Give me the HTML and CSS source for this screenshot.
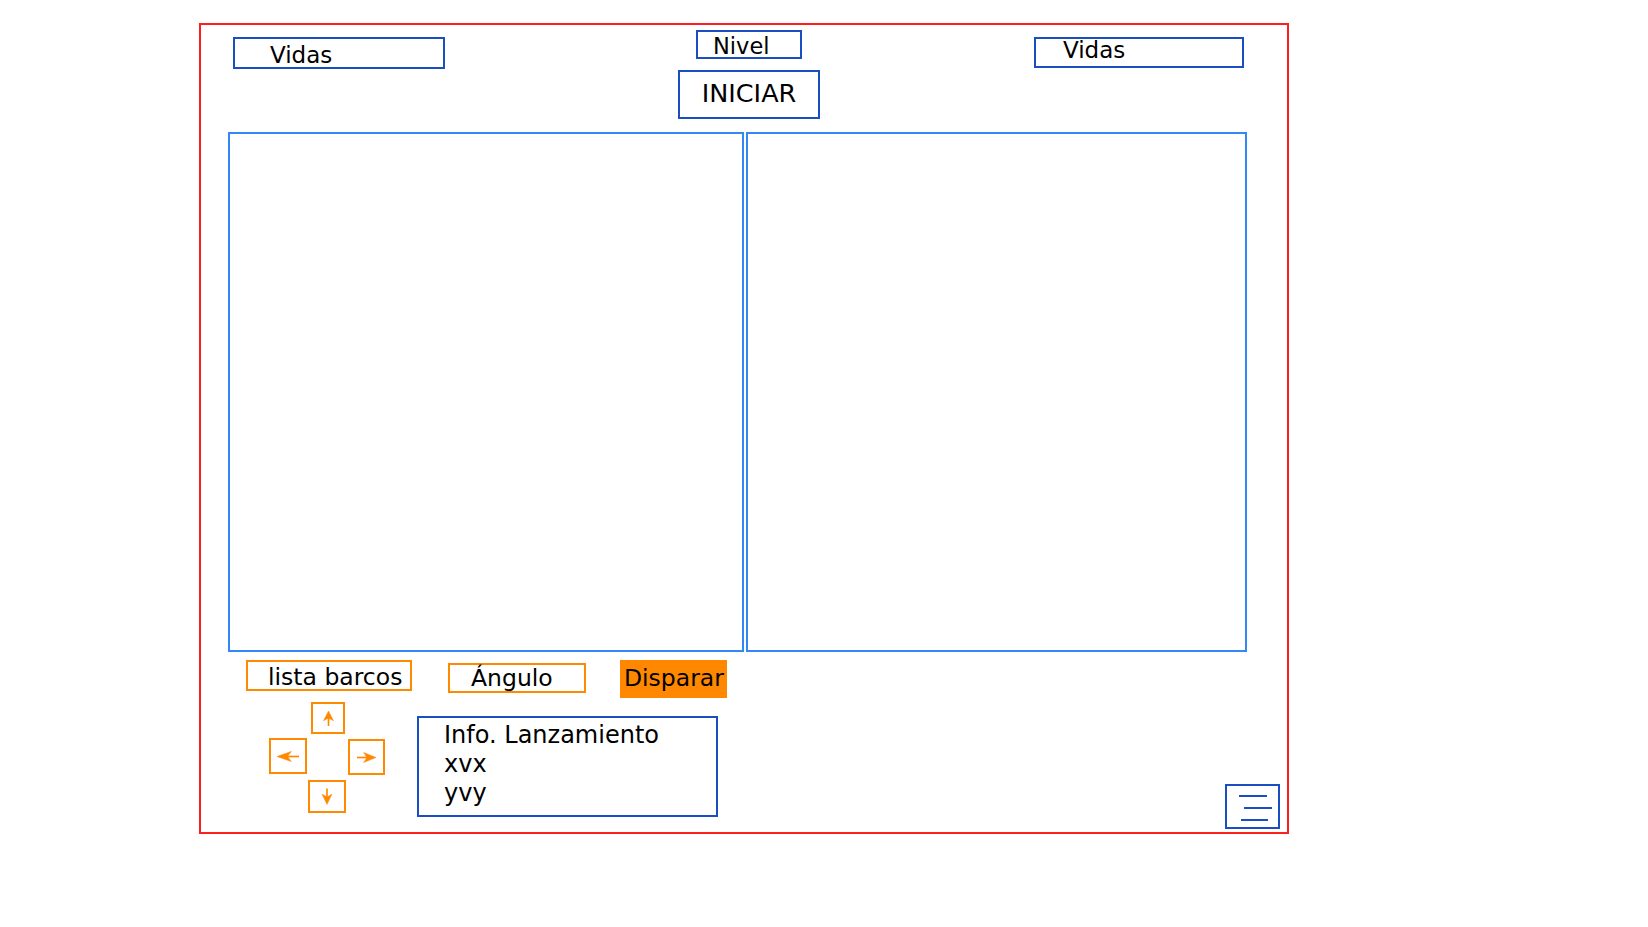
FILE: index.html
```html
<!DOCTYPE html>
<html lang="es">
<head>
  <meta charset="UTF-8">
  <title>Batalla naval - pantalla de juego</title>
  <link rel="stylesheet" href="styles.css">
</head>
<body>

<div class="frame">
  <div class="top">
    <div class="lives lives-left">Vidas</div>
    <div class="center-col">
      <div class="level">Nivel</div>
      <div class="start">INICIAR</div>
    </div>
    <div class="lives lives-right">Vidas</div>
  </div>

  <div class="board">
    <div class="panel panel-left"></div>
    <div class="panel panel-right"></div>
  </div>

  <div class="controls">
    <div class="controls-main">
      <div class="actions">
        <div class="ships">lista barcos</div>
        <div class="angle">Ángulo</div>
        <div class="fire">Disparar</div>
      </div>

      <div class="lower">
        <div class="pad">
          <div class="pad-row">
            <div class="key key-up">
              <svg class="arrow up" width="15" height="11" viewBox="0 0 20 12" preserveAspectRatio="none"><line x1="0" y1="6" x2="12" y2="6"/><path d="M20 6 L7 0.5 L10.5 6 L7 11.5 Z"/></svg>
            </div>
          </div>
          <div class="pad-row mid">
            <div class="key key-left">
              <svg class="arrow left" width="22" height="11" viewBox="0 0 20 12" preserveAspectRatio="none"><line x1="0" y1="6" x2="12" y2="6"/><path d="M20 6 L7 0.5 L10.5 6 L7 11.5 Z"/></svg>
            </div>
            <div class="key key-right">
              <svg class="arrow" width="19" height="11" viewBox="0 0 20 12" preserveAspectRatio="none"><line x1="0" y1="6" x2="12" y2="6"/><path d="M20 6 L7 0.5 L10.5 6 L7 11.5 Z"/></svg>
            </div>
          </div>
          <div class="pad-row">
            <div class="key key-down">
              <svg class="arrow down" width="16" height="11" viewBox="0 0 20 12" preserveAspectRatio="none"><line x1="0" y1="6" x2="12" y2="6"/><path d="M20 6 L7 0.5 L10.5 6 L7 11.5 Z"/></svg>
            </div>
          </div>
        </div>

        <div class="info">
          <div>Info. Lanzamiento</div>
          <div>xvx</div>
          <div>yvy</div>
        </div>
      </div>
    </div>

    <div class="menu-btn">
      <span class="bar bar1"></span>
      <span class="bar bar2"></span>
      <span class="bar bar3"></span>
    </div>
  </div>
</div>

</body>
</html>
```

FILE: styles.css
```css
body {
  margin: 0;
  padding: 0;
  background-color: #fff;
  font-family: 'DejaVu Sans', Verdana, sans-serif;
  font-size: 23.5px;
  line-height: 26px;
  color: #000;
}
.frame {
  box-sizing: border-box;
  width: 1090px;
  height: 811px;
  margin: 23px 0 0 199px;
  border: 2px solid #ff1e1e;
  display: flex;
  flex-direction: column;
}

/* barra superior */
.top {
  display: flex;
  align-items: flex-start;
  padding-top: 5px;
}
.lives {
  box-sizing: border-box;
  border: 2px solid #1a4fc4;
  font-size: 23px;
  margin-top: 7px;
}
.lives-left {
  width: 212px;
  height: 32px;
  margin-left: 32px;
  padding: 3px 0 0 35px;
}
.lives-right {
  width: 210px;
  height: 31px;
  margin-left: 214px;
  padding: 0 0 0 27px;
  line-height: 22px;
}
.center-col {
  width: 142px;
  margin-left: 233px;
  display: flex;
  flex-direction: column;
  align-items: center;
}
.level {
  box-sizing: border-box;
  width: 106px;
  height: 29px;
  border: 2px solid #1a4fc4;
  font-size: 22.5px;
  line-height: 25px;
  padding: 2px 0 0 15px;
}
.start {
  box-sizing: border-box;
  width: 142px;
  height: 49px;
  margin-top: 11px;
  border: 2px solid #1a4fc4;
  font-size: 25.5px;
  line-height: 30px;
  padding-top: 6px;
  text-align: center;
}

/* tableros */
.board {
  display: flex;
  margin: 13px 0 0 27px;
}
.panel {
  box-sizing: border-box;
  height: 520px;
  border: 2px solid #3388f5;
}
.panel-left {
  width: 516px;
}
.panel-right {
  width: 501px;
  margin-left: 2px;
}

/* controles inferiores */
.controls {
  flex: 1;
  display: flex;
}
.controls-main {
  margin-top: 8px;
}
.actions {
  display: flex;
  align-items: flex-start;
}
.ships, .angle, .key {
  box-sizing: border-box;
  border: 2px solid #ff8a00;
}
.ships {
  width: 166px;
  height: 31px;
  margin-left: 45px;
  padding: 2px 0 0 20px;
}
.angle {
  width: 138px;
  height: 30px;
  margin: 3px 0 0 36px;
  padding-left: 21px;
}
.fire {
  box-sizing: border-box;
  width: 107px;
  height: 38px;
  margin-left: 34px;
  padding: 5px 0 0 4px;
  background-color: #ff8800;
}

.lower {
  display: flex;
  align-items: flex-start;
}
.pad {
  width: 116px;
  margin: 4px 0 0 68px;
}
.pad-row {
  display: flex;
  align-items: flex-start;
}
.pad-row.mid {
  margin: 4px 0 5px;
}
.key {
  display: flex;
  align-items: center;
  justify-content: center;
}
.key-up {
  width: 34px;
  height: 32px;
  margin-left: 42px;
}
.key-left {
  width: 38px;
  height: 36px;
}
.key-right {
  width: 37px;
  height: 36px;
  margin: 1px 0 0 41px;
}
.key-down {
  width: 38px;
  height: 33px;
  margin-left: 39px;
}
.arrow {
  fill: #ff8800;
  stroke: #ff8800;
  overflow: visible;
}
.arrow line {
  stroke-width: 1.8;
}
.arrow path {
  stroke-width: 0.5;
}
.arrow.up {
  transform: rotate(-90deg);
}
.arrow.down {
  transform: rotate(90deg);
}
.arrow.left {
  transform: rotate(180deg);
}

.info {
  box-sizing: border-box;
  width: 301px;
  height: 101px;
  margin: 18px 0 0 32px;
  border: 2px solid #1a4fc4;
  padding: 3px 0 0 25px;
  font-size: 24px;
  line-height: 29px;
}

.menu-btn {
  box-sizing: border-box;
  width: 55px;
  height: 45px;
  margin: 0 7px 3px auto;
  align-self: flex-end;
  border: 2px solid #1a4fc4;
}
.bar {
  display: block;
  height: 2px;
  background-color: #1a4fc4;
}
.bar1 {
  width: 28px;
  margin: 9px 0 0 12px;
}
.bar2 {
  width: 28px;
  margin: 10px 0 0 17px;
}
.bar3 {
  width: 27px;
  margin: 10px 0 0 14px;
}
```
